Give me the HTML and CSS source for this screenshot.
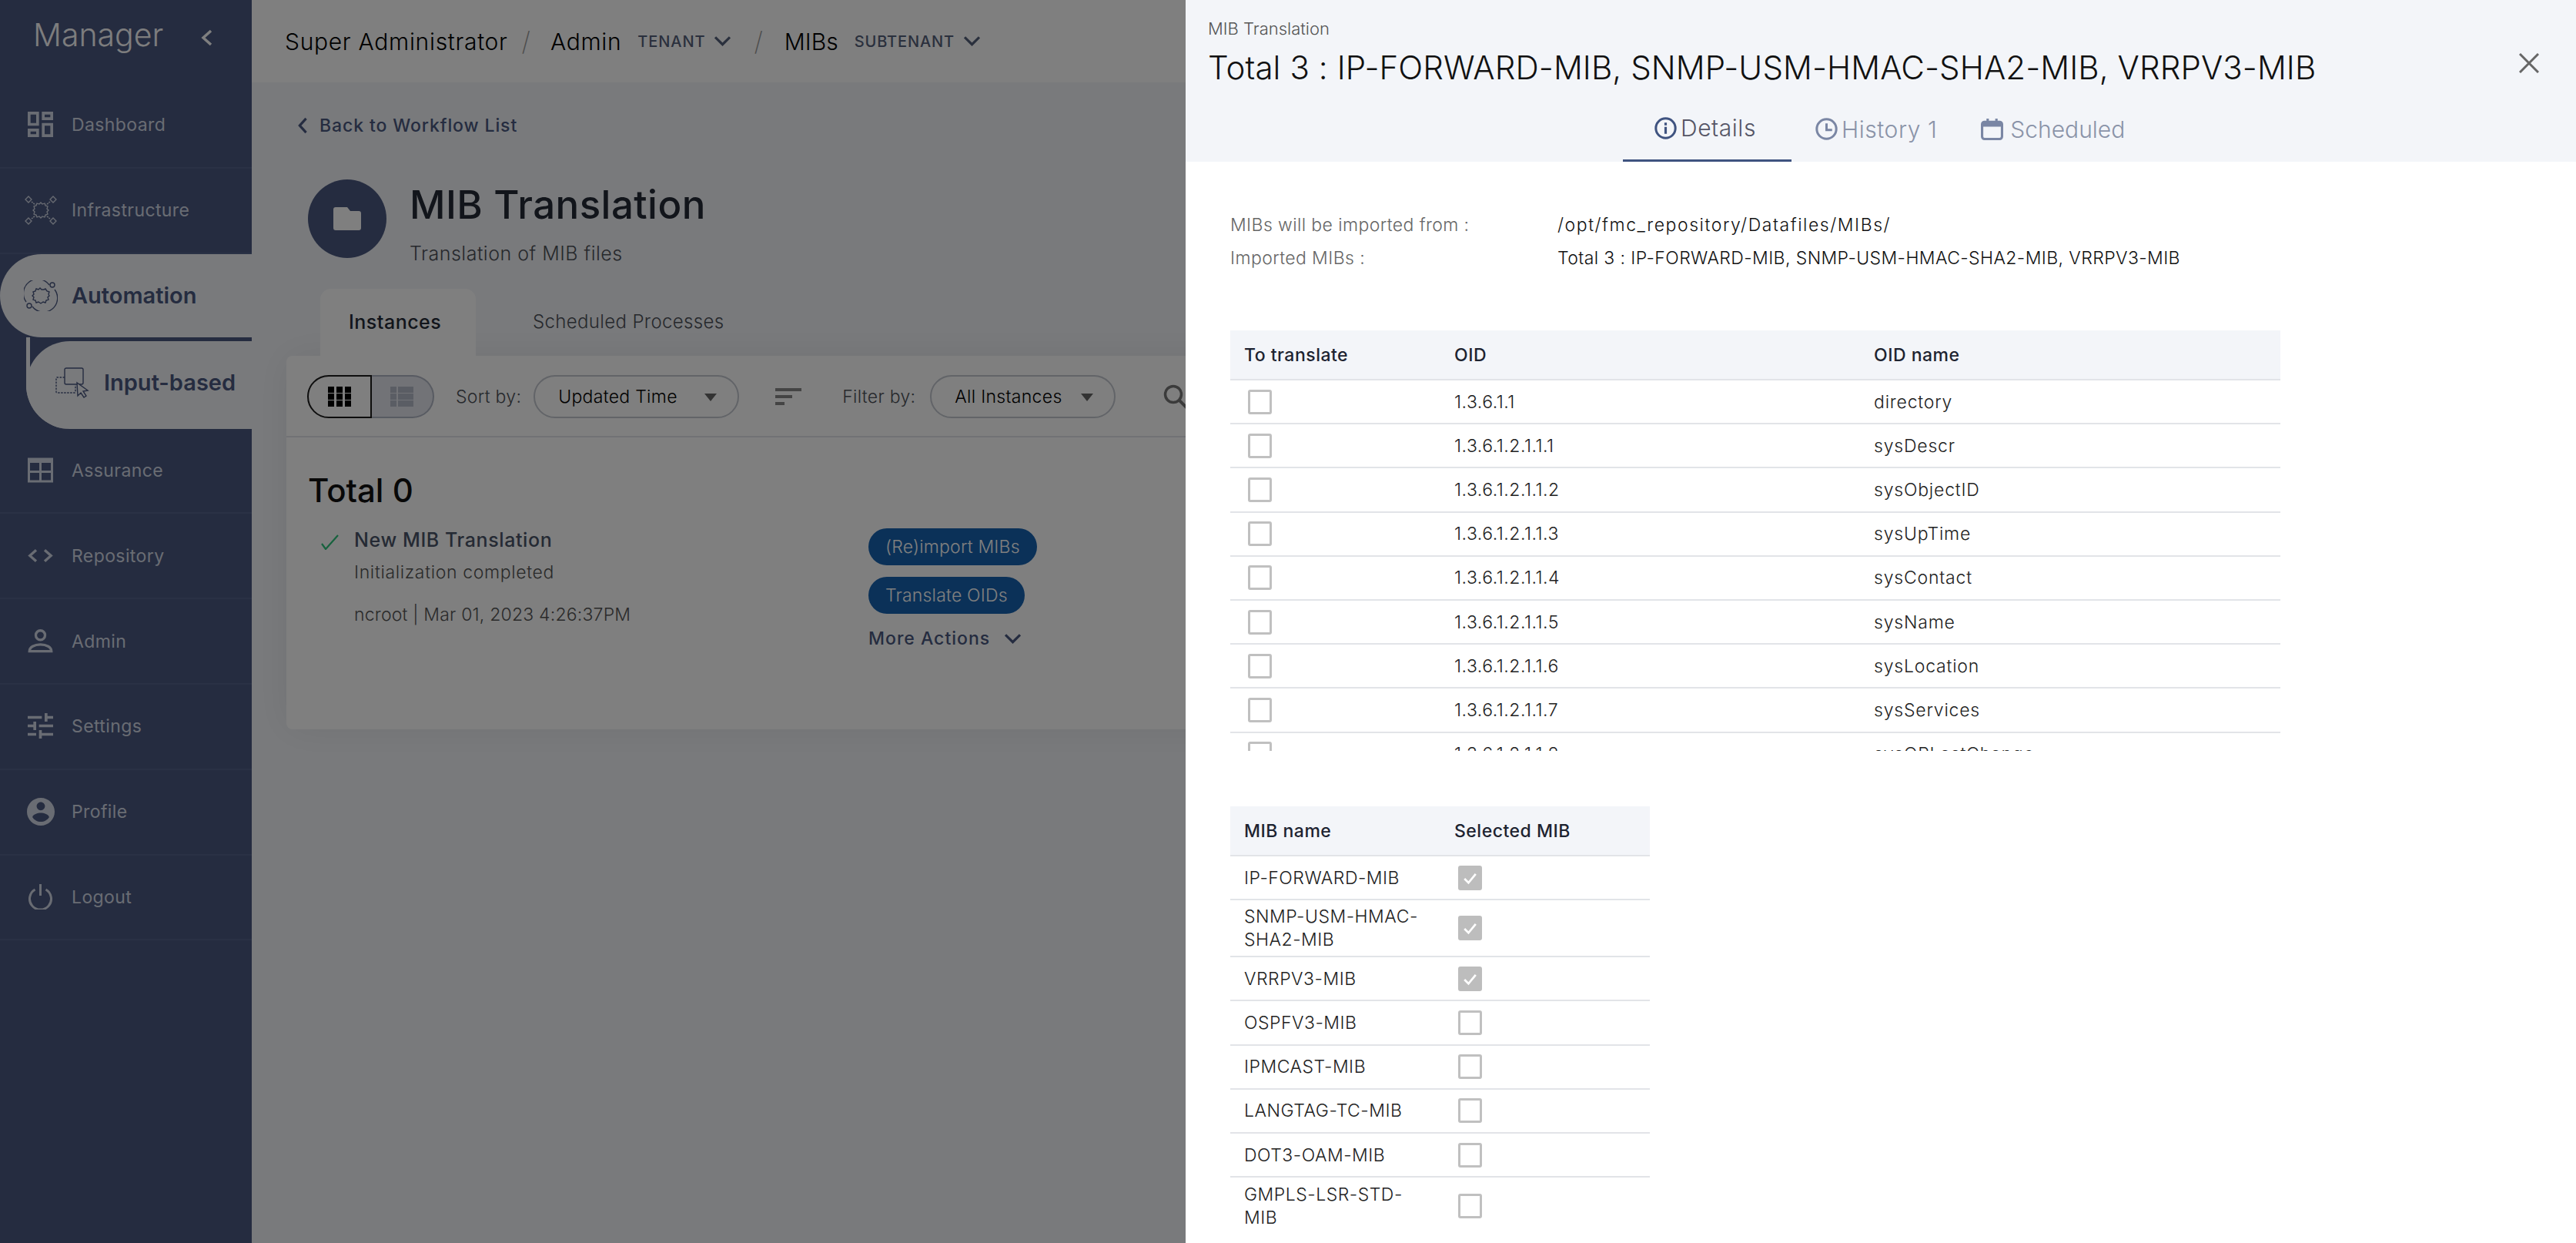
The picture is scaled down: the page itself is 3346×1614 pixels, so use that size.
FILE: index.html
```html
<!DOCTYPE html>
<html lang="en">
<head>
<meta charset="utf-8">
<title>MIB Translation</title>
<link rel="stylesheet" href="styles.css">
</head>
<body>
<div class="app">
  <aside class="sidebar">
    <div class="brand"><span class="brand-name">Manager</span>
      <svg class="brand-chev" viewBox="0 0 16 24"><path d="M13 3 3 12l10 9" fill="none" stroke="currentColor" stroke-width="3.5"/></svg>
    </div>
    <a class="nav"><svg class="nav-ico" viewBox="3 3 18 18"><path fill="currentColor" d="M19 5v2h-4V5h4M9 5v6H5V5h4m10 8v6h-4v-6h4M9 17v2H5v-2h4M21 3h-8v6h8V3zM11 3H3v10h8V3zm10 8h-8v10h8V11zm-10 4H3v6h8v-6z"/></svg><span>Dashboard</span></a>
    <a class="nav"><svg class="nav-ico wide" viewBox="0 0 44 40" fill="none" stroke="currentColor" stroke-width="1.3"><path d="M22 12l2 2 3-1 1 3 3 1-1 3 2 2-2 2 1 3-3 1-1 3-3-1-2 2-2-2-3 1-1-3-3-1 1-3-2-2 2-2-1-3 3-1 1-3 3 1z" transform="translate(0 -2)"/><path d="M6 2l4 4-4 4-4-4zM38 2l4 4-4 4-4-4zM6 30l4 4-4 4-4-4zM38 30l4 4-4 4-4-4z"/><path d="M10 9l5 4M34 9l-5 4M10 31l5-4M34 31l-5-4" stroke-dasharray="2 1" stroke-width="1.6"/></svg><span>Infrastructure</span></a>
    <a class="nav active"><svg class="nav-ico wide" viewBox="0 0 44 40" fill="none" stroke="currentColor" stroke-width="1.4"><path d="M21 11l2 2h3l2-1 2 3 3 1-1 3 1 2-2 2 1 3-3 1-1 3-3-1-3 2-3-2-3 1-1-3-3-1 1-3-2-2 2-2-1-3 3-1 1-3 3 1z" transform="translate(0 -1)"/><path d="M33 6A18 18 0 0 0 3 28M11 34a18 18 0 0 0 29-22"/><circle cx="37" cy="6" r="3"/><circle cx="7" cy="33" r="3"/></svg><span>Automation</span></a>
    <div class="sub">
      <a class="sub-pill"><svg class="sub-ico" viewBox="0 0 44 40" fill="none" stroke="currentColor" stroke-width="1.4"><rect x="12" y="1" width="24" height="21" rx="2"/><path d="M12 13H2a1 1 0 0 0-1 1v18a1 1 0 0 0 1 1h23a1 1 0 0 0 1-1v-9" stroke-dasharray="2.5 1.5"/><path d="M28 20l1 17 4-4 4 6 3-2-4-6 6-1z" fill="#f3f5f9"/></svg><span>Input-based</span></a>
    </div>
    <a class="nav"><svg class="nav-ico" viewBox="0 0 33 32"><path fill="none" stroke="currentColor" stroke-width="3" d="M1.500 5h30v25.500h-30zM16.500 5v25.500M1.500 18h30"/><path fill="currentColor" d="M0 0h33v5H0z"/></svg><span>Assurance</span></a>
    <a class="nav"><svg class="nav-ico" viewBox="0 0 36 20"><path fill="none" stroke="currentColor" stroke-width="3.600" d="M12 2 3 10l9 8M24 2l9 8-9 8"/></svg><span>Repository</span></a>
    <a class="nav"><svg class="nav-ico" viewBox="0 0 30 30"><circle cx="15" cy="8" r="5.500" fill="none" stroke="currentColor" stroke-width="3"/><path fill="none" stroke="currentColor" stroke-width="3" d="M2 27c0-5 6-8 13-8s13 3 13 8z"/></svg><span>Admin</span></a>
    <a class="nav"><svg class="nav-ico" viewBox="3 3 18 18"><path fill="currentColor" d="M3 17v2h6v-2H3zM3 5v2h10V5H3zm10 16v-2h8v-2h-8v-2h-2v6h2zM7 9v2H3v2h4v2h2V9H7zm14 4v-2H11v2h10zm-6-4h2V7h4V5h-4V3h-2v6z"/></svg><span>Settings</span></a>
    <a class="nav"><svg class="nav-ico big" viewBox="2 2 20 20"><path fill="currentColor" d="M12 2C6.480 2 2 6.480 2 12s4.480 10 10 10 10-4.480 10-10S17.520 2 12 2zm0 3c1.660 0 3 1.340 3 3s-1.340 3-3 3-3-1.340-3-3 1.340-3 3-3zm0 14.200c-2.500 0-4.710-1.280-6-3.220.030-1.990 4-3.080 6-3.080 1.990 0 5.970 1.090 6 3.080-1.290 1.940-3.500 3.220-6 3.220z"/></svg><span>Profile</span></a>
    <a class="nav"><svg class="nav-ico" viewBox="0 0 32 33"><path fill="none" stroke="currentColor" stroke-width="3" d="M9 7a14 14 0 1 0 14 0M16 0v15"/></svg><span>Logout</span></a>
  </aside>

  <main class="main">
    <header class="topbar">
      <span class="crumb">Super Administrator</span><span class="slash first">/</span>
      <span class="crumb">Admin</span><span class="tenant">TENANT</span>
      <svg class="crumb-chev" viewBox="0 0 20 12"><path d="M1 1l9 9 9-9" fill="none" stroke="currentColor" stroke-width="3"/></svg>
      <span class="slash">/</span>
      <span class="crumb tight">MIBs</span><span class="tenant">SUBTENANT</span>
      <svg class="crumb-chev" viewBox="0 0 20 12"><path d="M1 1l9 9 9-9" fill="none" stroke="currentColor" stroke-width="3"/></svg>
    </header>
    <div class="content">
      <a class="back"><svg class="back-chev" viewBox="0 0 14 24"><path d="M12 2 3 12l9 10" fill="none" stroke="currentColor" stroke-width="3.500"/></svg>Back to Workflow List</a>
      <div class="head">
        <div class="head-circle"><svg class="folder" viewBox="0 0 36 30"><path fill="#fff" d="M3 0h15l4 5h11a3 3 0 0 1 3 3v19a3 3 0 0 1-3 3H3a3 3 0 0 1-3-3V3a3 3 0 0 1 3-3z"/></svg></div>
        <div class="head-text">
          <h1 class="title">MIB Translation</h1>
          <p class="subtitle">Translation of MIB files</p>
        </div>
      </div>
      <div class="tabs">
        <div class="tab on">Instances</div>
        <div class="tab">Scheduled Processes</div>
      </div>
      <section class="card">
        <div class="toolbar">
          <div class="toggle">
            <div class="toggle-btn on"><svg class="tg-ico" viewBox="0 0 30 26"><path fill="currentColor" d="M0 0h8v8H0zM11 0h8v8h-8zM22 0h8v8h-8zM0 9h8v8H0zM11 9h8v8h-8zM22 9h8v8h-8zM0 18h8v8H0zM11 18h8v8h-8zM22 18h8v8h-8z"/></svg></div>
            <div class="toggle-btn"><svg class="tg-ico" viewBox="0 0 30 26"><path fill="currentColor" d="M0 0h8v8H0zM10 0h20v8H10zM0 9h8v8H0zM10 9h20v8H10zM0 18h8v8H0zM10 18h20v8H10z"/></svg></div>
          </div>
          <span class="tb-label sort-label">Sort by:</span>
          <div class="select sel-sort"><span>Updated Time</span><i class="caret"></i></div>
          <svg class="sort-ico" viewBox="0 0 34 22"><path fill="currentColor" d="M0 0h34v4H0zM0 9h22v4H0zM0 18h12v4H0z"/></svg>
          <span class="tb-label filter-label">Filter by:</span>
          <div class="select sel-filter"><span>All Instances</span><i class="caret"></i></div>
          <svg class="search-ico" viewBox="0 0 32 32"><circle cx="13" cy="13" r="10.500" fill="none" stroke="currentColor" stroke-width="3.500"/><path d="M21 21l10 10" stroke="currentColor" stroke-width="4"/></svg>
        </div>
        <div class="card-body">
          <h2 class="total">Total 0</h2>
          <div class="instance">
            <svg class="check" viewBox="0 0 26 20"><path d="M2 12l5 7L23 1" fill="none" stroke="#2fc47c" stroke-width="2.200"/></svg>
            <div class="inst-text">
              <div class="inst-name">New MIB Translation</div>
              <div class="inst-status">Initialization completed</div>
              <div class="inst-meta">ncroot | Mar 01, 2023 4:26:37PM</div>
            </div>
            <div class="actions">
              <button class="btn">(Re)import MIBs</button>
              <button class="btn">Translate OIDs</button>
              <a class="more">More Actions<svg class="more-chev" viewBox="0 0 20 12"><path d="M1 1l9 9 9-9" fill="none" stroke="currentColor" stroke-width="3"/></svg></a>
            </div>
          </div>
        </div>
      </section>
    </div>
  </main>
</div>

<div class="overlay"></div>

<aside class="panel">
  <div class="panel-head">
    <button class="close"><svg viewBox="0 0 26 26"><path d="M1 1l24 24M25 1 1 25" fill="none" stroke="#666" stroke-width="3"/></svg></button>
    <div class="eyebrow">MIB Translation</div>
    <div class="panel-title">Total 3 : IP-FORWARD-MIB, SNMP-USM-HMAC-SHA2-MIB, VRRPV3-MIB</div>
    <div class="ptabs">
      <div class="ptab on"><svg class="ptab-ico" viewBox="0 0 24 24"><circle cx="12" cy="12" r="10.500" fill="none" stroke="currentColor" stroke-width="2.500"/><path fill="currentColor" d="M10.700 10.500h2.600v7.500h-2.600zM10.700 6h2.600v2.800h-2.600z"/></svg>Details</div>
      <div class="ptab hist"><svg class="ptab-ico" viewBox="0 0 24 24"><circle cx="12" cy="12" r="10.500" fill="none" stroke="currentColor" stroke-width="2.500"/><path fill="none" stroke="currentColor" stroke-width="2.500" d="M12 6v7h6"/></svg>History 1</div>
      <div class="ptab sched"><svg class="ptab-ico" viewBox="0 0 28 28"><rect x="1.500" y="5" width="25" height="21.500" rx="3" fill="none" stroke="currentColor" stroke-width="3"/><path fill="currentColor" d="M1.500 5h25v6h-25zM7 1h3v6H7zM18 1h3v6h-3z"/></svg>Scheduled</div>
    </div>
  </div>
  <div class="panel-body">
    <div class="info"><span class="info-label">MIBs will be imported from :</span><span class="info-val path">/opt/fmc_repository/Datafiles/MIBs/</span></div>
    <div class="info"><span class="info-label">Imported MIBs :</span><span class="info-val">Total 3 : IP-FORWARD-MIB, SNMP-USM-HMAC-SHA2-MIB, VRRPV3-MIB</span></div>

    <div class="oid-wrap">
      <table class="grid oid-table">
        <colgroup><col class="c1"><col class="c2"><col></colgroup>
        <thead><tr><th>To translate</th><th>OID</th><th>OID name</th></tr></thead>
        <tbody>
          <tr><td><i class="cb"></i></td><td>1.3.6.1.1</td><td>directory</td></tr>
          <tr><td><i class="cb"></i></td><td>1.3.6.1.2.1.1.1</td><td>sysDescr</td></tr>
          <tr><td><i class="cb"></i></td><td>1.3.6.1.2.1.1.2</td><td>sysObjectID</td></tr>
          <tr><td><i class="cb"></i></td><td>1.3.6.1.2.1.1.3</td><td>sysUpTime</td></tr>
          <tr><td><i class="cb"></i></td><td>1.3.6.1.2.1.1.4</td><td>sysContact</td></tr>
          <tr><td><i class="cb"></i></td><td>1.3.6.1.2.1.1.5</td><td>sysName</td></tr>
          <tr><td><i class="cb"></i></td><td>1.3.6.1.2.1.1.6</td><td>sysLocation</td></tr>
          <tr><td><i class="cb"></i></td><td>1.3.6.1.2.1.1.7</td><td>sysServices</td></tr>
          <tr><td><i class="cb"></i></td><td>1.3.6.1.2.1.1.8</td><td>sysORLastChange</td></tr>
        </tbody>
      </table>
    </div>

    <table class="grid mib-table">
      <colgroup><col class="c1"><col></colgroup>
      <thead><tr><th>MIB name</th><th>Selected MIB</th></tr></thead>
      <tbody>
        <tr><td>IP-FORWARD-MIB</td><td><i class="cb on"><svg viewBox="0 0 24 24"><path d="M5 13l5 5 9-11" fill="none" stroke="#fff" stroke-width="2.600"/></svg></i></td></tr>
        <tr class="tall"><td>SNMP-USM-HMAC-SHA2-MIB</td><td><i class="cb on"><svg viewBox="0 0 24 24"><path d="M5 13l5 5 9-11" fill="none" stroke="#fff" stroke-width="2.600"/></svg></i></td></tr>
        <tr><td>VRRPV3-MIB</td><td><i class="cb on"><svg viewBox="0 0 24 24"><path d="M5 13l5 5 9-11" fill="none" stroke="#fff" stroke-width="2.600"/></svg></i></td></tr>
        <tr><td>OSPFV3-MIB</td><td><i class="cb"></i></td></tr>
        <tr><td>IPMCAST-MIB</td><td><i class="cb"></i></td></tr>
        <tr><td>LANGTAG-TC-MIB</td><td><i class="cb"></i></td></tr>
        <tr><td>DOT3-OAM-MIB</td><td><i class="cb"></i></td></tr>
        <tr class="tall"><td>GMPLS-LSR-STD-MIB</td><td><i class="cb"></i></td></tr>
      </tbody>
    </table>
  </div>
</aside>
</body>
</html>
```
FILE: styles.css
```css
* { box-sizing: border-box; }
html, body { margin: 0; height: 100%; overflow: hidden; }
body { font-family: Inter, "Noto Sans", sans-serif; background: #f3f5f9; color: #1d2330; }
a { color: inherit; text-decoration: none; }
h1, h2, p { margin: 0; }
i { font-style: normal; }

.app { display: flex; height: 1614px; overflow: hidden; }

/* sidebar */
.sidebar { flex: 0 0 327px; background: #4a5880; color: #d3d9e6; display: flex; flex-direction: column; }
.brand { height: 108px; flex: none; display: flex; align-items: flex-start; padding: 20px 0 0 43px; color: #fff; }
.brand-name { font-size: 41px; font-weight: 300; line-height: 50px; opacity: .98; width: 218px; }
.brand-chev { width: 16px; height: 24px; margin-top: 17px; }
.nav { height: 110.8px; flex: none; display: flex; align-items: center; padding-left: 93px; position: relative; font-size: 23px; letter-spacing: .4px; border-bottom: 2px solid #55638b; }
.nav-ico { position: absolute; left: 36px; top: 50%; width: 33px; height: 33px; margin-top: -17px; }
.nav-ico.wide { left: 31px; width: 44px; height: 40px; margin-top: -20px; }
.nav-ico.big { width: 36px; height: 36px; left: 35px; margin-top: -18px; }
.nav.active { height: 108px; background: #f3f5f9; color: #4a5880; border: 0; border-radius: 54px 0 0 54px; font-weight: 600; font-size: 29px; letter-spacing: 0; }
.sub { margin-left: 34px; height: 119px; flex: none; padding-top: 5px; border-left: 5px solid #f3f5f9; border-bottom-left-radius: 57px; }
.sub-pill { height: 114px; margin-left: -5px; width: 293px; background: #f3f5f9; border-radius: 57px 0 0 57px; color: #4a5880; display: flex; align-items: center; padding: 0 0 6px 101px; font-size: 29px; font-weight: 600; position: relative; }
.sub-ico { position: absolute; left: 38px; top: 34px; width: 44px; height: 40px; }

/* main */
.main { flex: 1; min-width: 0; }
.topbar { height: 107px; background: #fff; display: flex; align-items: center; padding-left: 43px; color: #000; }
.crumb { font-size: 30px; font-weight: 300; letter-spacing: .7px; }
.crumb.tight { letter-spacing: 0; }
.slash { font-size: 34px; font-weight: 200; color: #999; margin: 0 28px 0 30px; }
.slash.first { margin: 0 26px 0 18px; }
.tenant { margin-left: 21px; font-size: 20px; font-weight: 500; color: #55607a; letter-spacing: .9px; }
.crumb-chev { width: 21px; height: 13px; margin-left: 12px; color: #55607a; }
.content { padding: 41px 0 0 45px; }
.back { display: flex; align-items: center; height: 30px; margin-left: 14px; font-size: 23px; font-weight: 500; letter-spacing: .9px; color: #4a5880; }
.back-chev { width: 14px; height: 22px; margin-right: 15px; }
.head { display: flex; margin: 55px 0 0 28px; height: 102px; }
.head-circle { width: 102px; height: 102px; border-radius: 50%; background: #4a5880; display: flex; align-items: center; justify-content: center; }
.folder { width: 36px; height: 30px; }
.head-text { margin-left: 30px; padding-top: 3px; }
.title { font-size: 51px; font-weight: 500; line-height: 60px; letter-spacing: .45px; color: #242a36; }
.subtitle { margin-top: 18px; font-size: 25px; line-height: 30px; font-weight: 300; letter-spacing: .5px; color: #4d5158; }
.tabs { display: flex; margin: 40px 0 0 44px; }
.tab { height: 87px; padding-top: 28px; font-size: 24px; line-height: 30px; font-weight: 300; letter-spacing: .35px; color: #4d5158; margin-left: 74px; }
.tab.on { width: 202px; margin-left: 0; padding-left: 37px; background: #fff; border-radius: 14px 14px 0 0; color: #242a36; font-size: 25px; font-weight: 500; letter-spacing: .5px; }
.card { width: 1680px; height: 485px; background: #fff; border-radius: 8px; box-shadow: 0 0 50px rgba(0,0,0,.07); }
.toolbar { height: 106px; padding: 25px 0 0 27px; border-bottom: 2px solid #e3e5ea; display: flex; align-items: flex-start; }
.toggle { display: flex; width: 165px; height: 56px; }
.toggle-btn { flex: 1; display: flex; align-items: center; justify-content: center; border: 2px solid #b0b6c4; color: #b4bbc9; background: #e4e7ee; border-left: 0; border-radius: 0 28px 28px 0; }
.toggle-btn.on { background: #fff; color: #000; border: 2px solid #1c1c1c; border-radius: 28px 0 0 28px; }
.tg-ico { width: 30px; height: 26px; }
.tb-label { font-size: 23px; line-height: 56px; font-weight: 300; letter-spacing: .3px; color: #4d5158; }
.sort-label { margin-left: 28px; }
.filter-label { margin-left: 53px; }
.select { height: 56px; border: 2px solid #c4c8d0; border-radius: 28px; display: flex; align-items: center; font-size: 23px; font-weight: 300; letter-spacing: .3px; color: #000; padding-left: 30px; position: relative; }
.sel-sort { width: 267px; margin-left: 16px; }
.sel-filter { width: 241px; margin-left: 19px; }
.caret { position: absolute; right: 27px; top: 22px; border: 8px solid transparent; border-top: 10px solid #666; border-bottom: 0; }
.sort-ico { width: 34px; height: 22px; margin: 17px 0 0 47px; color: #888; }
.search-ico { width: 32px; height: 32px; margin: 12px 0 0 62px; color: #777; }
.card-body { padding: 44px 0 0 28px; }
.total { font-size: 42px; line-height: 50px; font-weight: 500; color: #111; }
.instance { display: flex; margin-top: 24px; position: relative; }
.check { width: 26px; height: 20px; margin: 8px 0 0 16px; }
.inst-text { width: 668px; margin-left: 18px; }
.inst-name { font-size: 25px; line-height: 30px; font-weight: 500; letter-spacing: .6px; color: #4a5568; }
.inst-status { margin-top: 12px; font-size: 23px; line-height: 30px; font-weight: 300; letter-spacing: .65px; color: #555; }
.inst-meta { margin-top: 25px; font-size: 23px; line-height: 30px; font-weight: 300; letter-spacing: .2px; color: #555; }
.actions { display: flex; flex-direction: column; align-items: flex-start; }
.btn { height: 48px; border: 0; border-radius: 24px; padding: 0 22px; margin-bottom: 15px; background: #1662b0; color: #fff; font: 300 23px Inter, sans-serif; letter-spacing: .2px; }
.more { display: flex; align-items: center; margin-top: 2px; font-size: 23px; line-height: 30px; font-weight: 500; letter-spacing: 1px; color: #4a5880; }
.more-chev { width: 21px; height: 13px; margin-left: 19px; }

/* overlay + panel */
.overlay { position: fixed; inset: 0; background: rgba(0,0,0,.5); }
.panel { position: fixed; top: 0; right: 0; bottom: 0; width: 1806px; background: #fff; overflow: hidden; }
.panel-head { height: 210px; background: #f3f5f9; padding: 22px 0 0 29px; position: relative; }
.close { position: absolute; left: 1732px; top: 69px; width: 26px; height: 26px; padding: 0; border: 0; background: none; }
.close svg { display: block; width: 26px; height: 26px; }
.eyebrow { font-size: 22px; line-height: 30px; font-weight: 300; color: #555; }
.panel-title { margin-top: 11px; font-size: 42px; line-height: 50px; font-weight: 300; letter-spacing: .1px; color: #111; }
.ptabs { position: absolute; left: 568px; top: 125px; height: 85px; display: flex; }
.ptab { display: flex; align-items: center; font-size: 30px; font-weight: 300; letter-spacing: .55px; color: #8a93a8; }
.ptab.on { color: #556; border-bottom: 3px solid #3f5380; width: 219px; padding-left: 41px; }
.ptab.on .ptab-ico { color: #3f5380; }
.ptab.hist { padding: 0 57px 0 31px; }
.ptab.sched { letter-spacing: 0; }
.ptab.sched .ptab-ico { margin-right: 9px; }
.ptab-ico { width: 29px; height: 29px; margin-right: 5px; color: #7a86a4; flex: none; }
.panel-body { padding: 60px 0 0 58px; }
.info { display: flex; height: 43px; align-items: center; font-size: 23px; font-weight: 300; letter-spacing: .4px; }
.info-label { width: 425px; color: #666; }
.info-val { color: #111; }
.info-val.path { letter-spacing: 1.550px; }
.oid-wrap { width: 1364px; height: 546px; margin-top: 73px; overflow: hidden; }
.grid { border-collapse: collapse; table-layout: fixed; font-size: 23px; }
.oid-table { width: 1364px; }
.oid-table td:last-child { letter-spacing: .8px; }
.mib-table { width: 545px; margin-top: 72px; }
.c1 { width: 273px; }
.c2 { width: 545px; }
.grid th { height: 64px; background: #f3f5f9; text-align: left; padding: 0 18px; font-weight: 500; color: #1d2330; border-bottom: 2px solid #e2e4e8; font-size: 23px; letter-spacing: .5px; }
.grid td { height: 57.2px; padding: 0 18px; font-weight: 300; color: #222; border-bottom: 2px solid #e2e4e8; line-height: 30px; letter-spacing: .5px; }
.grid tr.tall td { height: 74px; }
.mib-table tr:last-child td { border-bottom: 0; }
.mib-table td:first-child { padding-right: 17px; }
.grid td:first-child:has(.cb), .mib-table td:last-child { padding-left: 23px; }
.cb { display: block; width: 31px; height: 32px; border: 3px solid #c0c0c0; border-radius: 3px; background: #fff; }
.cb.on { background: #bdbdbd; border-color: #bdbdbd; }
.cb svg { display: block; width: 100%; height: 100%; }
```
